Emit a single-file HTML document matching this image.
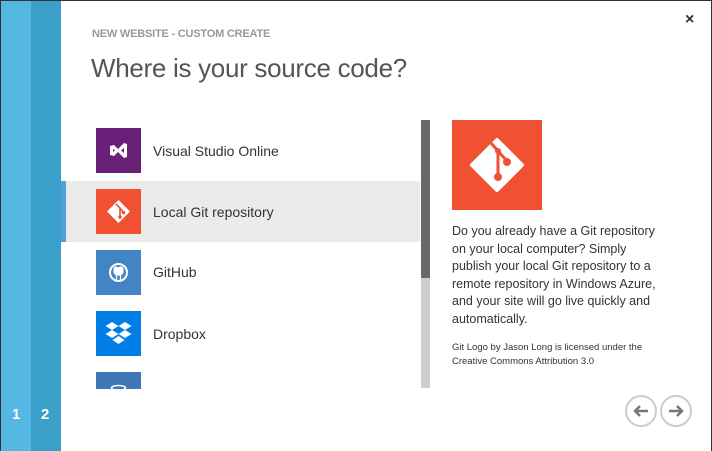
<!DOCTYPE html>
<html><head><style>
*{margin:0;padding:0;box-sizing:border-box}
body{width:712px;height:451px;overflow:hidden;background:#fff;font-family:"Liberation Sans",sans-serif;position:relative;color:#333}
.a{position:absolute}
.ic{position:absolute;left:96px;width:45px;height:45px}
.lbl{position:absolute;left:153px;font-size:14px;color:#333}
</style></head><body>
<div class="a" style="left:0;top:0;width:712px;height:1px;background:#333"></div>
<div class="a" style="left:0;top:0;width:1px;height:451px;background:#333"></div>
<div class="a" style="left:711px;top:0;width:1px;height:451px;background:#333"></div>
<div class="a" style="left:1px;top:1px;width:30px;height:450px;background:#55b8e2"></div>
<div class="a" style="left:31px;top:1px;width:30px;height:450px;background:#3a9fc9"></div>
<div class="a" style="left:12px;top:406px;color:#fff;font-size:15px;font-weight:bold">1</div>
<div class="a" style="left:41px;top:406px;color:#fff;font-size:15px;font-weight:bold">2</div>
<div class="a" style="left:685px;top:11px;font-size:16px;font-weight:bold;color:#333">×</div>
<div class="a" style="left:92px;top:28px;font-size:11px;color:#999;font-weight:bold;letter-spacing:-0.2px">NEW WEBSITE - CUSTOM CREATE</div>
<div class="a" style="left:91px;top:53px;font-size:26px;color:#555;letter-spacing:-0.3px">Where is your source code?</div>

<div class="a" style="left:61px;top:181px;width:359px;height:61px;background:#ebebeb"></div>
<div class="a" style="left:61px;top:181px;width:5px;height:61px;background:#4f9fd8"></div>

<div class="ic" style="top:128px;background:#682079"><svg width="45" height="45"><path d="M14 18 L18 17 L22 21 L28 15 L31 16 L31 29 L28 30 L22 24 L18 28 L14 27Z M17 21 L17 24 L19 22.5Z M28 20 L28 25 L25 22.5Z" fill="#fff" fill-rule="evenodd"/></svg></div>
<div class="lbl" style="top:143px">Visual Studio Online</div>
<div class="ic" style="top:189px;background:#f05133"><svg width="45" height="45"><path d="M22.5 11 L34 22.5 L22.5 34 L11 22.5Z" fill="#fff"/><path d="M20 15 L24 19 L24 29 M24 19 L27 23" stroke="#f05133" stroke-width="1.6" fill="none"/><circle cx="24" cy="28" r="1.8" fill="#f05133"/><circle cx="27.5" cy="23.5" r="1.8" fill="#f05133"/></svg></div>
<div class="lbl" style="top:204px">Local Git repository</div>
<div class="ic" style="top:250px;background:#4284c4"><svg width="45" height="45"><circle cx="22.5" cy="22.5" r="8.5" stroke="#fff" stroke-width="2" fill="none"/><path d="M18 21 Q18 17 20 17 L22 18 L25 17 Q27 17 27 21 Q27 25 22.5 25 Q18 25 18 21Z M20.5 25 L20.5 30 M24.5 25 L24.5 30" fill="#fff" stroke="#fff" stroke-width="1.3"/></svg></div>
<div class="lbl" style="top:264px">GitHub</div>
<div class="ic" style="top:311px;background:#007ee5"><svg width="45" height="45"><path d="M16 11 L22.5 15 L16 19 L9.5 15Z M29 11 L35.5 15 L29 19 L22.5 15Z M16 19 L22.5 23 L16 27 L9.5 23Z M29 19 L35.5 23 L29 27 L22.5 23Z M22.5 25 L28.5 29 L22.5 33 L16.5 29Z" fill="#fff"/></svg></div>
<div class="lbl" style="top:326px">Dropbox</div>
<div class="ic" style="top:372px;height:17px;background:#3e78b6"><svg width="45" height="17"><ellipse cx="22.5" cy="16" rx="7" ry="2.5" stroke="#fff" stroke-width="1.6" fill="none"/></svg></div>
<div class="a" style="left:61px;top:389px;width:370px;height:62px;background:#fff"></div>

<div class="a" style="left:421px;top:120px;width:9px;height:158px;background:#686868"></div>
<div class="a" style="left:421px;top:278px;width:9px;height:110px;background:#cdcdcd"></div>

<div class="a" style="left:452px;top:120px;width:90px;height:90px;background:#f05133"><svg width="90" height="90"><path d="M45 20 L70 45 L45 70 L20 45Z" fill="#fff" stroke="#fff" stroke-width="4" stroke-linejoin="round"/><path d="M39 23 L46 31 L46 59 M46 31 L55 41" stroke="#f05133" stroke-width="3" fill="none"/><circle cx="46" cy="57" r="4" fill="#f05133"/><circle cx="55" cy="42" r="4" fill="#f05133"/><circle cx="46" cy="31" r="3" fill="#f05133"/></svg></div>
<div class="a" style="left:452px;top:223px;width:212px;font-size:12.5px;line-height:17.5px;color:#333">Do you already have a Git repository on your local computer? Simply publish your local Git repository to a remote repository in Windows Azure, and your site will go live quickly and automatically.</div>
<div class="a" style="left:452px;top:341px;width:220px;font-size:9.5px;line-height:14px;color:#333">Git Logo by Jason Long is licensed under the Creative Commons Attribution 3.0</div>

<div class="a" style="left:625px;top:395px;width:32px;height:32px;border:2px solid #ccc;border-radius:50%"><svg width="28" height="28"><path d="M21 14 L8 14 M13 9 L8 14 L13 19" stroke="#777" stroke-width="2.5" fill="none"/></svg></div>
<div class="a" style="left:660px;top:395px;width:32px;height:32px;border:2px solid #ccc;border-radius:50%"><svg width="28" height="28"><path d="M7 14 L20 14 M15 9 L20 14 L15 19" stroke="#777" stroke-width="2.5" fill="none"/></svg></div>
</body></html>
